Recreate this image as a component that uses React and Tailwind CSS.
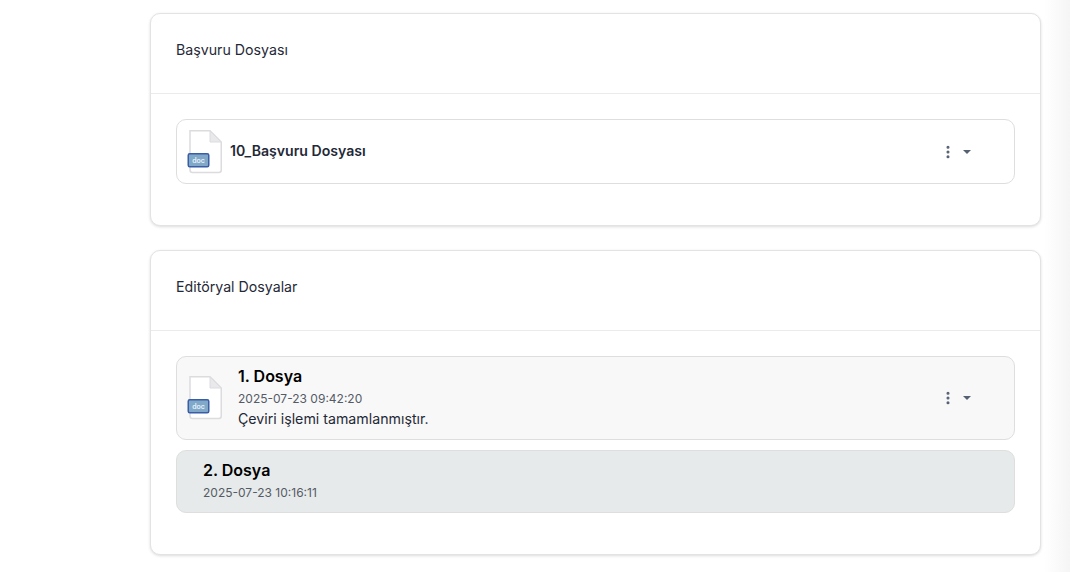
import { EllipsisVertical } from "lucide-react";

const font = { fontFamily: "Inter, sans-serif" };

function DocIcon() {
  return (
    <svg width="36" height="44" viewBox="0 0 36 44" className="shrink-0">
      <path d="M3 .75H23L34.25 12V40a2.5 2.5 0 0 1-2.5 2.5H5.5A2.5 2.5 0 0 1 3 40V.75Z" fill="#fff" stroke="#dcdcdf" strokeWidth="1.5" />
      <path d="M23 1V12H34L23 1Z" fill="#e9e9ec" stroke="#dcdcdf" strokeWidth="1" />
      <rect x="1.25" y="23.75" width="20.5" height="13" rx="1.5" fill="#7fa8c9" stroke="#3a5da6" strokeWidth="1.5" />
      <text x="11.5" y="32.7" textAnchor="middle" fontSize="7" fontWeight="600" fill="#e8f0f7" fontFamily="Inter, sans-serif">doc</text>
    </svg>
  );
}

function Actions() {
  return (
    <div className="ml-auto mr-[43px] flex items-center gap-[7px] text-[#566073]">
      <EllipsisVertical size={16} strokeWidth={2.6} />
      <span className="h-0 w-0 border-x-[4.5px] border-t-[4.5px] border-x-transparent border-t-[#566073]" />
    </div>
  );
}

function Card({ title, className, children }) {
  return (
    <section className={`w-[891px] rounded-[10px] border border-[#e3e3e3] bg-white shadow-[0_1px_3px_rgba(0,0,0,0.14)] ${className}`}>
      <div className="flex h-[80px] items-center border-b border-[#ebebeb] px-[25px] pb-[7px] text-[14.2px] text-[#1f2937]">
        {title}
      </div>
      <div className="px-[25px] pt-[25px]">{children}</div>
    </section>
  );
}

export default function App() {
  return (
    <div style={font} className="relative flex h-[572px] w-[1070px] overflow-hidden bg-white">
      <main className="ml-[150px] pt-[13px]">
        <Card title="Başvuru Dosyası" className="h-[213px]">
          <div className="flex h-[65px] items-center rounded-[10px] border border-[#dedede] pl-[10px]">
            <DocIcon />
            <span className="mb-[1px] ml-[7px] text-[14.1px] font-semibold text-[#1f2937]">10_Başvuru Dosyası</span>
            <Actions />
          </div>
        </Card>

        <Card title="Editöryal Dosyalar" className="mt-[24px] h-[305px]">
          <div className="flex h-[84px] items-center rounded-[10px] border border-[#dedede] bg-[#f8f8f8] pl-[10px]">
            <DocIcon />
            <div className="ml-[15px]">
              <div className="-mt-[2px] mb-[2px] text-[16px] font-semibold leading-[22px] text-black">1. Dosya</div>
              <div className="text-[12px] leading-[19px] text-[#555b66]">2025-07-23 09:42:20</div>
              <div className="text-[14.2px] leading-[21px] text-[#1f2937]">Çeviri işlemi tamamlanmıştır.</div>
            </div>
            <Actions />
          </div>
          <div className="mt-[10px] flex h-[63px] flex-col justify-center rounded-[10px] border border-[#dedede] bg-[#e6eaea] pb-[2px] pl-[26px]">
            <div className="text-[16px] font-semibold leading-[22px] text-black">2. Dosya</div>
            <div className="mt-[2px] text-[12px] leading-[19px] text-[#555b66]">2025-07-23 10:16:11</div>
          </div>
        </Card>
      </main>
      <div className="absolute inset-y-0 right-0 w-[26px] bg-gradient-to-r from-white to-[#f5f5f5]" />
    </div>
  );
}
